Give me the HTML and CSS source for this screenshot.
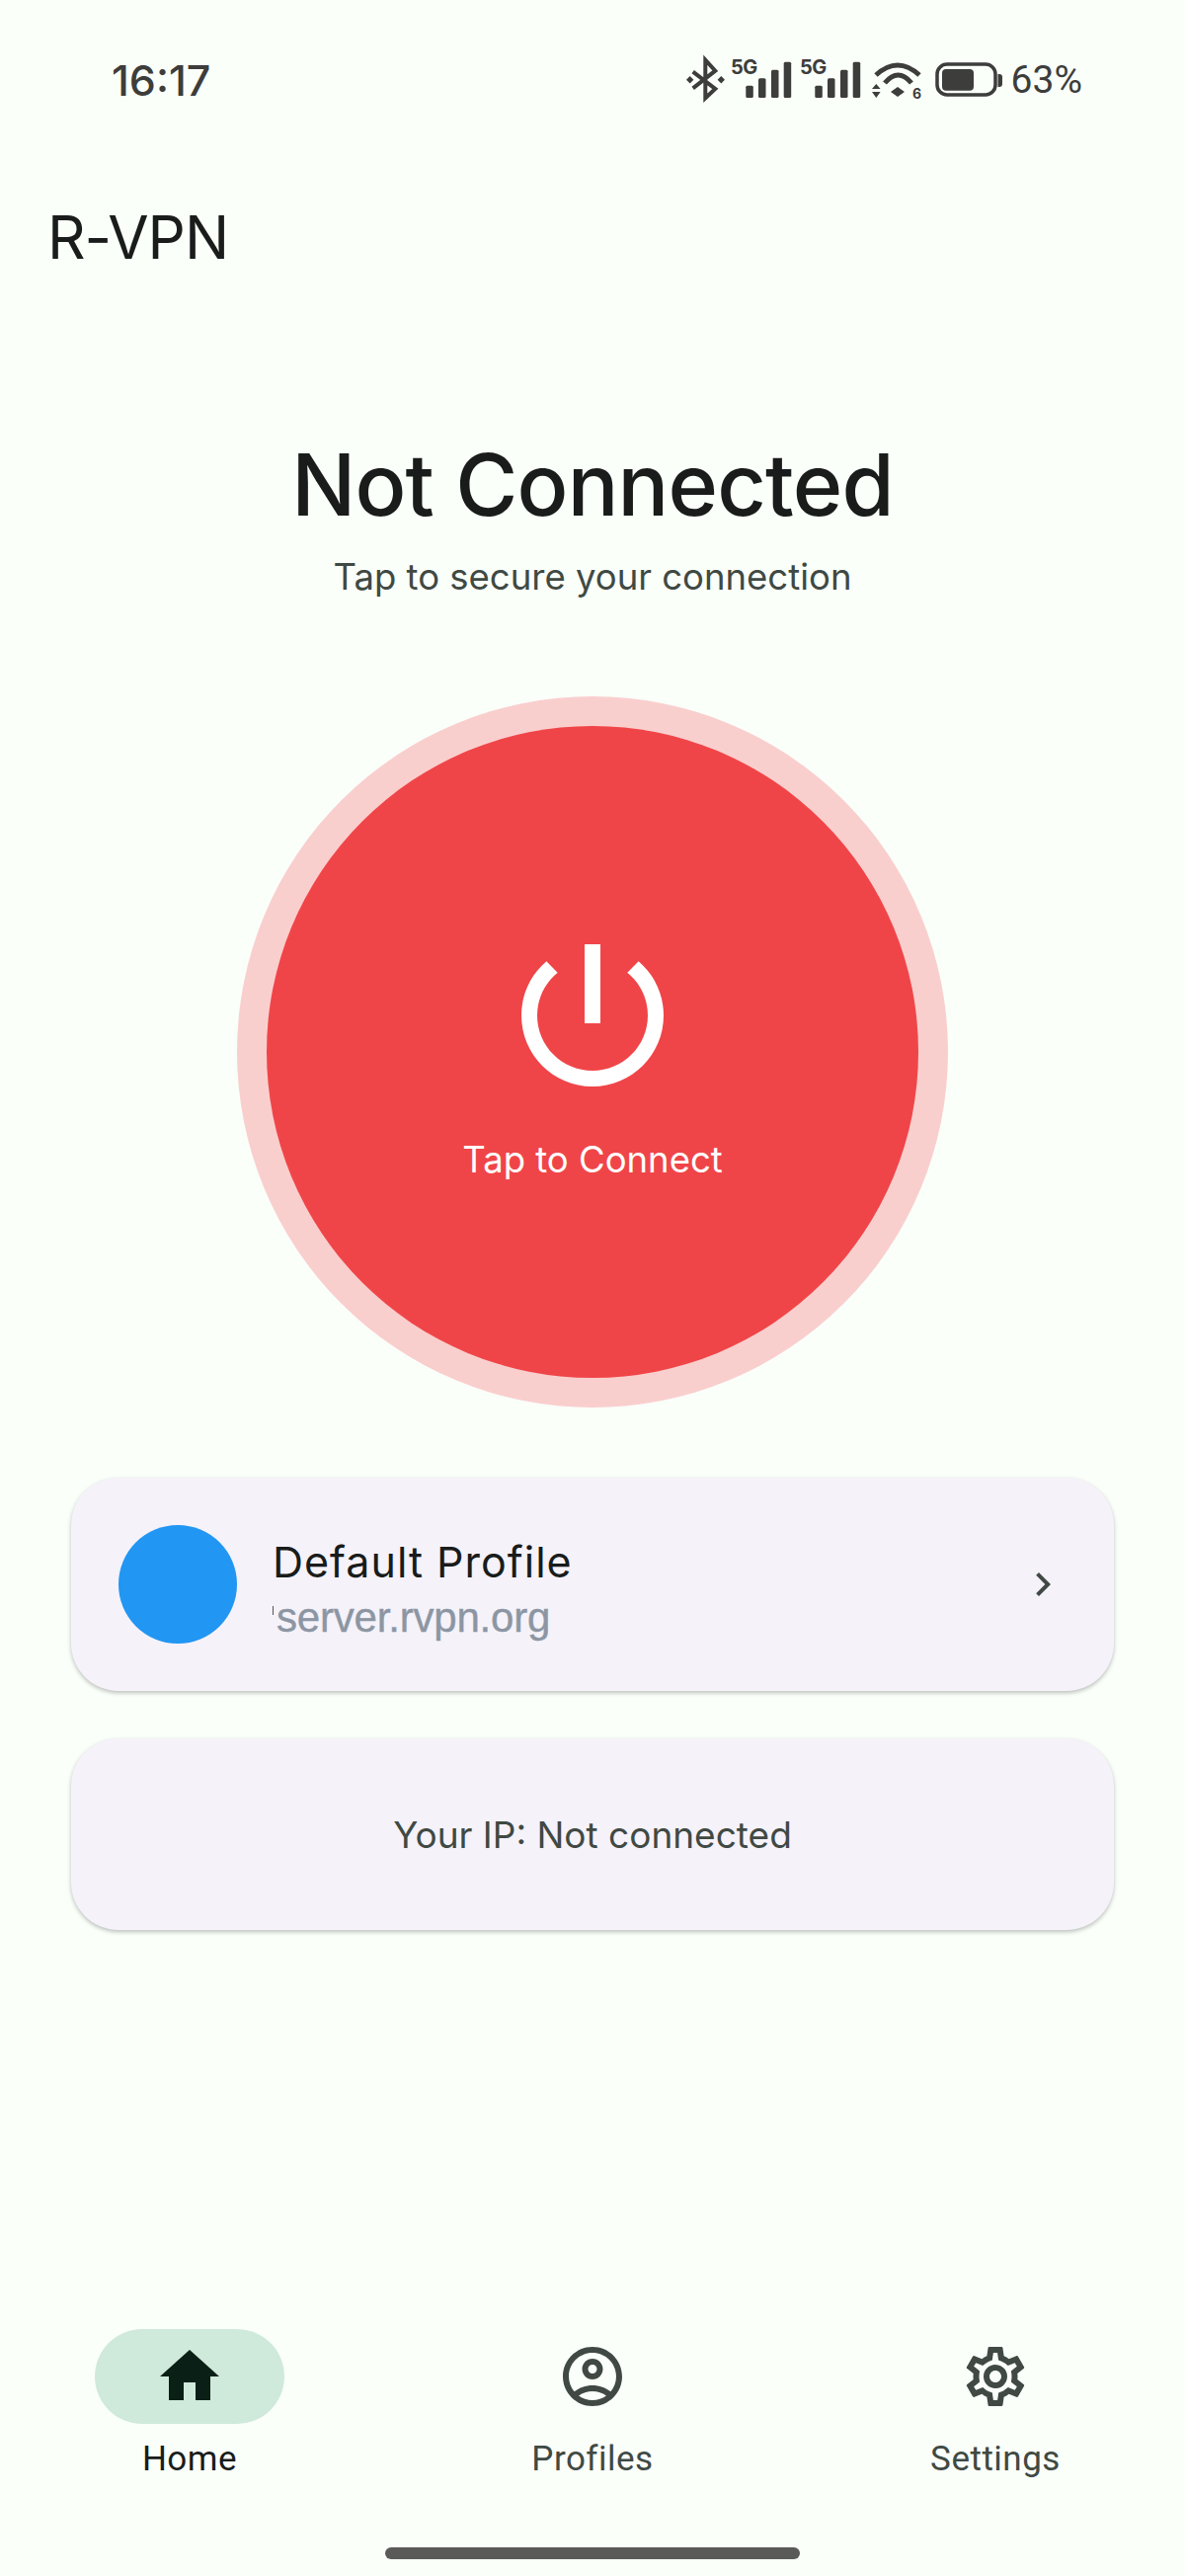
FILE: index.html
```html
<!DOCTYPE html>
<html lang="en">
<head>
    <meta charset="UTF-8">
    <meta name="viewport" content="width=device-width, initial-scale=1.0">
    <title>R-VPN</title>
    <link rel="stylesheet" href="styles.css">
</head>
<body>
    <div class="status-bar">
        <span class="time">16:17</span>
        <div class="status-icons">
            <svg class="icon-bt" width="39" height="44" viewBox="0 0 39 44">
                <path d="M6.7 13.7L29.3 31L19.3 40.3V1.7L29.3 12.7L6.7 30.3" fill="none" stroke="#3d3d3b" stroke-width="4"/>
                <path d="M3.7 18L7.4 21.7L3.7 25.4L0 21.7zM35.3 18L39 21.7L35.3 25.4L31.6 21.7z" fill="#3d3d3b"/>
            </svg>
            <svg class="icon-signal" width="62" height="44" viewBox="0 0 62 44">
                <text class="net-label" x="0" y="16">5G</text>
                <rect x="15.3" y="27.7" width="7.5" height="12.3" rx="1.5"/>
                <rect x="28" y="20.3" width="7.5" height="19.7" rx="1.5"/>
                <rect x="41" y="11.7" width="7.5" height="28.3" rx="1.5"/>
                <rect x="53.7" y="3.7" width="7.5" height="36.3" rx="1.5"/>
            </svg>
            <svg class="icon-signal" width="62" height="44" viewBox="0 0 62 44">
                <text class="net-label" x="0" y="16">5G</text>
                <rect x="15.3" y="27.7" width="7.5" height="12.3" rx="1.5"/>
                <rect x="28" y="20.3" width="7.5" height="19.7" rx="1.5"/>
                <rect x="41" y="11.7" width="7.5" height="28.3" rx="1.5"/>
                <rect x="53.7" y="3.7" width="7.5" height="36.3" rx="1.5"/>
            </svg>
            <svg class="icon-wifi" width="50" height="44" viewBox="0 0 50 44">
                <path d="M4 17Q26 -3 48 17M13 25Q26.500 9 40 25" fill="none" stroke="#3d3d3b" stroke-width="5"/>
                <path d="M19 34L26 29L33 34L26 39zM0 31L4.300 26L8.600 31zM0 34H8.600L4.300 40z" fill="#3d3d3b"/>
                <text class="wifi-label" x="41" y="41">6</text>
            </svg>
            <svg class="icon-battery" width="68" height="44" viewBox="0 0 68 44">
                <rect x="2" y="6" width="59" height="31" rx="10" fill="none" stroke="#3d3d3b" stroke-width="3.5"/>
                <path d="M63.500 16H65Q68 16 68 19V26Q68 29 65 29H63.500z" fill="#3d3d3b"/>
                <rect x="7" y="11" width="32" height="21.700" rx="4" fill="#3d3d3b"/>
            </svg>
            <span class="battery-text">63%</span>
        </div>
    </div>

    <div class="app-bar">R-VPN</div>

    <main class="content">
        <h1 class="title">Not Connected</h1>
        <p class="subtitle">Tap to secure your connection</p>

        <div class="power-ring">
            <button class="power-button">
                <svg width="192" height="192" viewBox="0 0 24 24" fill="#fff">
                    <path d="M13 3h-2v10h2V3zm4.830 2.170l-1.420 1.420C17.990 7.860 19 9.810 19 12c0 3.870-3.130 7-7 7s-7-3.130-7-7c0-2.190 1.010-4.140 2.580-5.420L6.170 5.170C4.230 6.820 3 9.260 3 12c0 4.970 4.030 9 9 9s9-4.030 9-9c0-2.740-1.230-5.180-3.170-6.830z"/>
                </svg>
                <span class="power-label">Tap to Connect</span>
            </button>
        </div>

        <div class="card profile-card">
            <div class="profile-dot"></div>
            <div class="profile-info">
                <div class="profile-name">Default Profile</div>
                <div class="profile-host">server.rvpn.org</div>
            </div>
            <svg width="48" height="48" viewBox="0 0 24 24" fill="#404943">
                <path d="M10 6L8.590 7.410 13.170 12l-4.580 4.590L10 18l6-6z"/>
            </svg>
        </div>

        <div class="card ip-card">Your IP: Not connected</div>
    </main>

    <nav class="nav-bar">
        <div class="nav-item active">
            <div class="nav-icon">
                <svg width="72" height="72" viewBox="0 0 24 24" fill="#0a1f16">
                    <path d="M10 20v-6h4v6h5v-8h3L12 3 2 12h3v8z"/>
                </svg>
            </div>
            <span class="nav-label">Home</span>
        </div>
        <div class="nav-item">
            <div class="nav-icon">
                <svg width="72" height="72" viewBox="0 0 24 24" fill="#404943">
                    <path d="M12 2C6.480 2 2 6.480 2 12s4.480 10 10 10 10-4.480 10-10S17.520 2 12 2zM7.350 18.500C8.660 17.560 10.260 17 12 17s3.340.560 4.650 1.500c-1.310.940-2.910 1.500-4.650 1.500s-3.340-.560-4.650-1.500zm10.790-1.380C16.450 15.800 14.320 15 12 15s-4.450.800-6.140 2.120C4.700 15.730 4 13.950 4 12c0-4.420 3.580-8 8-8s8 3.580 8 8c0 1.950-.700 3.730-1.860 5.120zM12 6c-1.930 0-3.500 1.570-3.500 3.500S10.070 13 12 13s3.500-1.570 3.500-3.500S13.930 6 12 6zm0 5c-.830 0-1.500-.670-1.500-1.500S11.170 8 12 8s1.500.670 1.500 1.500S12.830 11 12 11z"/>
                </svg>
            </div>
            <span class="nav-label">Profiles</span>
        </div>
        <div class="nav-item">
            <div class="nav-icon">
                <svg width="72" height="72" viewBox="0 0 24 24" fill="#404943">
                    <path d="M19.430 12.980c.040-.320.070-.640.070-.980 0-.340-.030-.660-.070-.980l2.110-1.650c.190-.150.240-.420.120-.640l-2-3.460c-.090-.160-.260-.250-.440-.250-.060 0-.120.010-.170.030l-2.490 1c-.520-.400-1.080-.730-1.690-.980l-.380-2.650C14.460 2.180 14.250 2 14 2h-4c-.250 0-.460.180-.490.420l-.380 2.650c-.610.250-1.170.590-1.690.980l-2.490-1c-.060-.020-.120-.030-.180-.030-.170 0-.340.090-.430.250l-2 3.460c-.130.220-.070.490.120.640l2.110 1.650c-.040.320-.070.650-.070.980 0 .330.030.660.070.980l-2.110 1.650c-.190.150-.240.420-.120.640l2 3.460c.090.160.260.250.440.250.060 0 .120-.010.170-.030l2.490-1c.520.400 1.080.730 1.690.980l.380 2.650c.030.240.240.420.490.420h4c.250 0 .460-.180.490-.420l.380-2.650c.610-.250 1.170-.590 1.690-.980l2.490 1c.060.020.120.030.180.030.170 0 .340-.090.430-.250l2-3.460c.120-.220.070-.490-.120-.640l-2.110-1.650zm-1.980-1.710c.040.310.050.520.050.730 0 .210-.020.430-.050.730l-.140 1.130.890.700 1.080.840-.700 1.210-1.270-.510-1.040-.420-.900.680c-.430.320-.840.560-1.250.730l-1.060.430-.160 1.130-.200 1.350h-1.400l-.190-1.350-.160-1.130-1.060-.430c-.430-.180-.830-.410-1.230-.710l-.910-.700-1.060.430-1.270.510-.700-1.210 1.080-.84.890-.700-.140-1.130c-.030-.310-.050-.540-.050-.740s.020-.430.050-.730l.140-1.130-.890-.700-1.080-.84.700-1.210 1.270.510 1.040.42.900-.68c.430-.320.840-.560 1.250-.73l1.060-.43.160-1.130.200-1.350h1.390l.190 1.350.160 1.130 1.060.43c.430.180.830.410 1.230.71l.910.700 1.060-.43 1.270-.51.700 1.210-1.070.85-.89.700.140 1.130zM12 8c-2.210 0-4 1.790-4 4s1.790 4 4 4 4-1.790 4-4-1.790-4-4-4zm0 6c-1.100 0-2-.900-2-2s.900-2 2-2 2 .900 2 2-.900 2-2 2z"/>
                </svg>
            </div>
            <span class="nav-label">Settings</span>
        </div>
    </nav>

    <div class="home-bar"></div>
</body>
</html>
```

FILE: styles.css
```css
* {
    box-sizing: border-box;
}
body {
    margin: 0;
    height: 2608px;
    display: flex;
    flex-direction: column;
    font-family: Inter, "Noto Sans", sans-serif;
    background: #fafffa;
    color: #191c1a;
}
.status-bar {
    height: 162px;
    padding: 0 104px 0 113px;
    display: flex;
    justify-content: space-between;
    align-items: center;
    color: #3d3d3b;
}
.time {
    font-size: 43px;
    font-weight: 500;
}
.status-icons {
    display: flex;
    align-items: center;
}
.status-icons svg {
    display: block;
    overflow: visible;
}
.icon-signal {
    margin-left: 6px;
    fill: #3d3d3b;
}
.icon-signal + .icon-signal {
    margin-left: 8px;
}
.icon-wifi {
    margin-left: 11px;
}
.icon-battery {
    margin-left: 14px;
}
.net-label {
    font-size: 20px;
    font-weight: 700;
    letter-spacing: -0.5px;
}
.wifi-label {
    font-size: 14px;
    font-weight: 700;
    fill: #3d3d3b;
}
.battery-text {
    margin-left: 9px;
    font-family: Roboto, sans-serif;
    font-size: 39px;
}
.app-bar {
    height: 156px;
    padding-left: 48px;
    display: flex;
    align-items: center;
    font-size: 60px;
    letter-spacing: -1px;
}
.content {
    flex: 1;
    display: flex;
    flex-direction: column;
    align-items: center;
}
.title {
    margin: 121px 0 0;
    font-size: 86px;
    font-weight: 500;
    line-height: 104px;
    letter-spacing: -0.8px;
}
.subtitle {
    margin: 17px 0 0;
    font-size: 36.500px;
    line-height: 48px;
    color: #404943;
}
.power-ring {
    margin-top: 97px;
    width: 720px;
    height: 720px;
    padding: 30px;
    border-radius: 50%;
    background: #f9cfce;
}
.power-button {
    width: 660px;
    height: 660px;
    padding: 197px 0 0;
    border: none;
    border-radius: 50%;
    background: #f04548;
    color: #fff;
    font-family: inherit;
    cursor: pointer;
    display: flex;
    flex-direction: column;
    align-items: center;
}
.power-button svg {
    display: block;
}
.power-label {
    margin-top: 26px;
    font-size: 36.500px;
    line-height: 48px;
}
.card {
    width: 1056px;
    border-radius: 48px;
    background: #f5f2fa;
    box-shadow: 0 2px 4px rgba(0, 0, 0, 0.25);
}
.profile-card {
    margin-top: 71px;
    padding: 48px;
    display: flex;
    align-items: center;
}
.profile-dot {
    width: 120px;
    height: 120px;
    border-radius: 50%;
    background: #2196f3;
}
.profile-info {
    flex: 1;
    margin-left: 36px;
    padding-top: 8px;
}
.profile-name {
    font-size: 43px;
    line-height: 54px;
    letter-spacing: 1px;
}
.profile-host {
    position: relative;
    margin-top: 5px;
    padding-left: 4px;
    font-family: "Liberation Sans", Arial, sans-serif;
    font-size: 42px;
    line-height: 50px;
    letter-spacing: -0.2px;
    color: #8c96a3;
    -webkit-text-stroke: 0.4px #8c96a3;
}
.profile-host::before {
    content: "";
    position: absolute;
    left: 0;
    top: 13px;
    width: 1px;
    height: 9px;
    background: #555;
}
.ip-card {
    margin-top: 48px;
    height: 194px;
    display: flex;
    justify-content: center;
    align-items: center;
    font-size: 37px;
    color: #404943;
}
.nav-bar {
    height: 221px;
    padding: 0 96px;
    display: flex;
    justify-content: space-between;
}
.nav-item {
    width: 192px;
    display: flex;
    flex-direction: column;
    align-items: center;
}
.nav-icon {
    width: 192px;
    height: 96px;
    border-radius: 48px;
    display: flex;
    justify-content: center;
    align-items: center;
}
.nav-item.active .nav-icon {
    background: #cfe9da;
}
.nav-label {
    margin-top: 14px;
    font-family: Roboto, sans-serif;
    font-size: 35px;
    line-height: 44px;
    letter-spacing: 0.5px;
    color: #404943;
}
.nav-item.active .nav-label {
    color: #191c1a;
}
.home-bar {
    width: 420px;
    height: 12px;
    margin: 0 auto 17px;
    border-radius: 6px;
    background: #5a5a58;
}
```
